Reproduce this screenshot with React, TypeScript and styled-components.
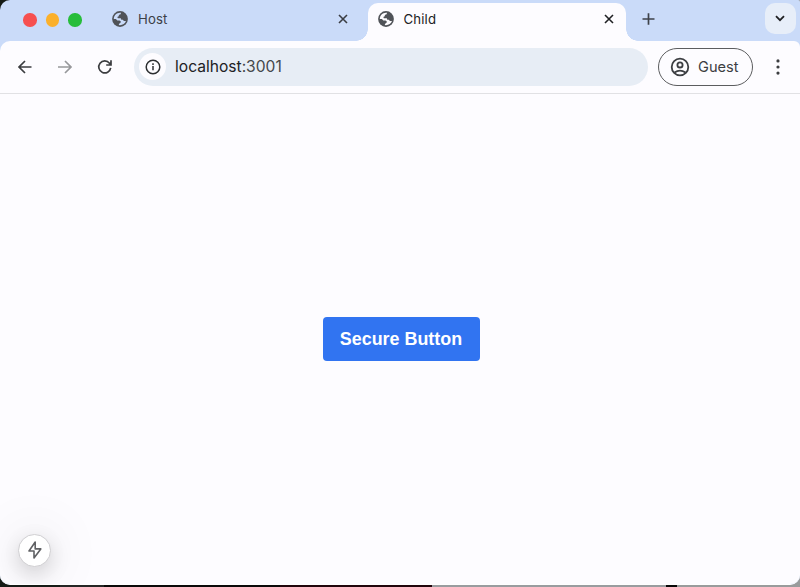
import React from 'react';
import styled, { createGlobalStyle, css } from 'styled-components';

const GlobalStyle = createGlobalStyle`
  * { box-sizing: border-box; }
  body { margin: 0; overflow: hidden; }
  button { font: inherit; padding: 0; margin: 0; border: 0; background: none; }
  svg { display: block; flex: none; }
`;

const Desktop = styled.div`
  width: 800px;
  height: 587px;
  background: linear-gradient(90deg, #151b16 0 60px, #252625 60px 104px, #0b0909 104px 280px, #21050c 280px 432px, #999c9f 432px 666px, #080808 666px 677px, #999b9c 677px);
  font-family: Inter, 'Liberation Sans', sans-serif;
`;

const BrowserWindow = styled.div`
  display: flex;
  flex-direction: column;
  height: 585px;
  overflow: hidden;
  border-radius: 10px 2px 10px 10px;
  background: #cadbf9;
  border-bottom: 1px solid #fff;
`;

const TabStrip = styled.div`
  display: flex;
  height: 41px;
  flex: none;
  padding-top: 3px;
`;

const TrafficLights = styled.div`
  display: flex;
  gap: 9px;
  width: 102px;
  padding: 10px 0 0 23px;
`;

const Light = styled.span<{ $color: string }>`
  width: 13.5px;
  height: 13.5px;
  border-radius: 50%;
  background: ${(p) => p.$color};
`;

const corner = css`
  content: '';
  position: absolute;
  bottom: 0;
  width: 12px;
  height: 12px;
`;

const Tab = styled.div<{ $active?: boolean }>`
  position: relative;
  display: flex;
  align-items: center;
  width: ${(p) => (p.$active ? 258.5 : 265.5)}px;
  height: 38px;
  padding: 0 ${(p) => (p.$active ? 12.5 : 19.5)}px 6px 10px;
  border-radius: 10px 10px 0 0;
  color: ${(p) => (p.$active ? '#202124' : '#3c4047')};
  ${(p) =>
    p.$active &&
    css`
      background: #fdfcff;
      &::before {
        ${corner}
        left: -12px;
        background: radial-gradient(circle at 0 0, transparent 11.5px, #fdfcff 12px);
      }
      &::after {
        ${corner}
        right: -12px;
        background: radial-gradient(circle at 100% 0, transparent 11.5px, #fdfcff 12px);
      }
    `}
`;

const TabTitle = styled.span`
  flex: 1;
  margin-left: 10px;
  font-size: 13.2px;
  line-height: 16px;
  letter-spacing: 0.15px;
`;

const NewTab = styled.button`
  display: flex;
  margin: 9px auto 0 15px;
  height: 14px;
`;

const TabSearch = styled.button`
  display: flex;
  align-items: center;
  justify-content: center;
  width: 31px;
  height: 31px;
  margin-right: 4.5px;
  border-radius: 10px;
  background: #e7eef9;
`;

const Toolbar = styled.div`
  display: flex;
  align-items: center;
  height: 53px;
  flex: none;
  padding: 0 0 1px 17px;
  border-radius: 10px 6px 0 0;
  background: #fdfcff;
  border-bottom: 1.5px solid #e1e1e4;
`;

const NavButtons = styled.div`
  display: flex;
  gap: 24px;
  width: 117px;
`;

const AddressBar = styled.div`
  display: flex;
  align-items: center;
  width: 514px;
  height: 38px;
  padding-left: 5px;
  border-radius: 19px;
  background: #e7edf5;
`;

const SiteInfo = styled.span`
  display: flex;
  align-items: center;
  justify-content: center;
  width: 27px;
  height: 27px;
  border-radius: 50%;
  background: #fdfcff;
`;

const Url = styled.span`
  margin: 1px 0 0 9px;
  font-size: 15.6px;
  line-height: 20px;
  color: #202124;
`;

const Port = styled.span`
  color: #44474b;
`;

const Profile = styled.button`
  display: flex;
  align-items: center;
  width: 95px;
  height: 38px;
  margin-left: 10px;
  padding-left: 11px;
  border: 1px solid #5c5d5f;
  border-radius: 19px;
  color: #3c3e42;
  font-size: 14.6px;
  gap: 8px;
`;

const MenuButton = styled.button`
  display: flex;
  margin-left: 14.5px;
`;

const Page = styled.main`
  position: relative;
  display: flex;
  flex: 1;
  align-items: center;
  justify-content: center;
  padding: 0 0 0 2px;
  background: #fdfcff;
`;

const SecureButton = styled.button`
  width: 157px;
  height: 44.5px;
  border-radius: 4px;
  background: #3174f1;
  color: #fff;
  font: bold 17.9px 'Liberation Sans', sans-serif;
`;

const DevIndicator = styled.div`
  position: absolute;
  left: 18px;
  bottom: 17.5px;
  display: flex;
  align-items: center;
  justify-content: center;
  width: 33px;
  height: 33px;
  border: 1px solid #d0cfd2;
  border-radius: 50%;
  background: #fff;
  box-shadow: 0 7px 18px 2px #00000020, 0 2px 55px 8px #00000012;
`;

const Globe = ({ land }: { land: string }) => (
  <svg width="16" height="16" viewBox="0 0 16 16">
    <circle cx="8" cy="8" r="7.9" fill="#505358" />
    <path
      fill={land}
      d="M9.1 1.8C8.7 2.5 8.9 3 8.3 3.5L7 3.8 6.7 5.2 5.3 6.1 5.9 7.2H8.8L9.3 8.8H11L11.8 10.1H14C13.1 12.5 10.8 14.2 8 14.2L6.9 14.1V12.9L8.7 11.5V10.3L7.5 9.4H5.3L3.9 8H1.8C1.8 4.6 4.6 1.8 8 1.8Z"
    />
  </svg>
);

const Close = ({ color }: { color: string }) => (
  <svg width="10" height="10" viewBox="0 0 10 10" fill="none" stroke={color} strokeWidth="1.6">
    <path d="M1 1l8 8M9 1L1 9" />
  </svg>
);

const Arrow = ({ forward }: { forward?: boolean }) => (
  <svg width="16" height="16" viewBox="0 0 16 16" fill="none" stroke={forward ? '#97989b' : '#3b3d40'} strokeWidth="1.7">
    <path d={forward ? 'M1 8h13M8 2l6 6-6 6' : 'M14.5 8H2M8 2L2 8l6 6'} />
  </svg>
);

export default function App() {
  return (
    <Desktop>
      <GlobalStyle />
      <BrowserWindow>
        <TabStrip>
          <TrafficLights>
            <Light $color="#f64f50" />
            <Light $color="#fbb02b" />
            <Light $color="#27bd3b" />
          </TrafficLights>
          <Tab>
            <Globe land="#cadbf9" />
            <TabTitle>Host</TabTitle>
            <Close color="#3a3d43" />
          </Tab>
          <Tab $active>
            <Globe land="#fdfcff" />
            <TabTitle>Child</TabTitle>
            <Close color="#202124" />
          </Tab>
          <NewTab aria-label="New tab">
            <svg width="14" height="14" viewBox="0 0 14 14" fill="none" stroke="#3e424a" strokeWidth="1.7">
              <path d="M7.5 1.2v11.6M1.5 7h12" />
            </svg>
          </NewTab>
          <TabSearch aria-label="Search tabs">
            <svg width="10" height="7" viewBox="0 0 10 7" fill="none" stroke="#202124" strokeWidth="1.8">
              <path d="M1 1.2l4 4 4-4" />
            </svg>
          </TabSearch>
        </TabStrip>
        <Toolbar>
          <NavButtons>
            <Arrow />
            <Arrow forward />
            <svg width="16" height="16" viewBox="0 0 16 16" fill="none" stroke="#3b3d40" strokeWidth="1.7">
              <path d="M13.7 8.8A6 6 0 1 1 12.5 4.2L14 5.8M14 1.2V6H9.2" />
            </svg>
          </NavButtons>
          <AddressBar>
            <SiteInfo>
              <svg width="16" height="16" viewBox="0 0 16 16" fill="none" stroke="#2d2f31" strokeWidth="1.5">
                <circle cx="8" cy="8" r="6.8" />
                <path d="M8 7v4.2M8 4.3v1.6" />
              </svg>
            </SiteInfo>
            <Url>
              localhost<Port>:3001</Port>
            </Url>
          </AddressBar>
          <Profile>
            <svg width="20" height="20" viewBox="0 0 20 20" fill="none" stroke="#3c3e42" strokeWidth="1.8">
              <circle cx="10" cy="10" r="8.3" />
              <circle cx="10" cy="7.9" r="2.6" />
              <path d="M4.5 15.6q5.5-3.8 11 0" />
            </svg>
            Guest
          </Profile>
          <MenuButton aria-label="Menu">
            <svg width="20" height="18" viewBox="0 0 20 18" fill="#3b3d40">
              <circle cx="10" cy="2.9" r="1.6" />
              <circle cx="10" cy="9" r="1.6" />
              <circle cx="10" cy="15.1" r="1.6" />
            </svg>
          </MenuButton>
        </Toolbar>
        <Page>
          <SecureButton>Secure Button</SecureButton>
          <DevIndicator>
            <svg width="16" height="20" viewBox="0 0 16 20" fill="none" stroke="#606164" strokeWidth="1.6" strokeLinejoin="round">
              <path d="M8.2 2L2 11H7V18L13.8 8.9H8.2Z" />
            </svg>
          </DevIndicator>
        </Page>
      </BrowserWindow>
    </Desktop>
  );
}
